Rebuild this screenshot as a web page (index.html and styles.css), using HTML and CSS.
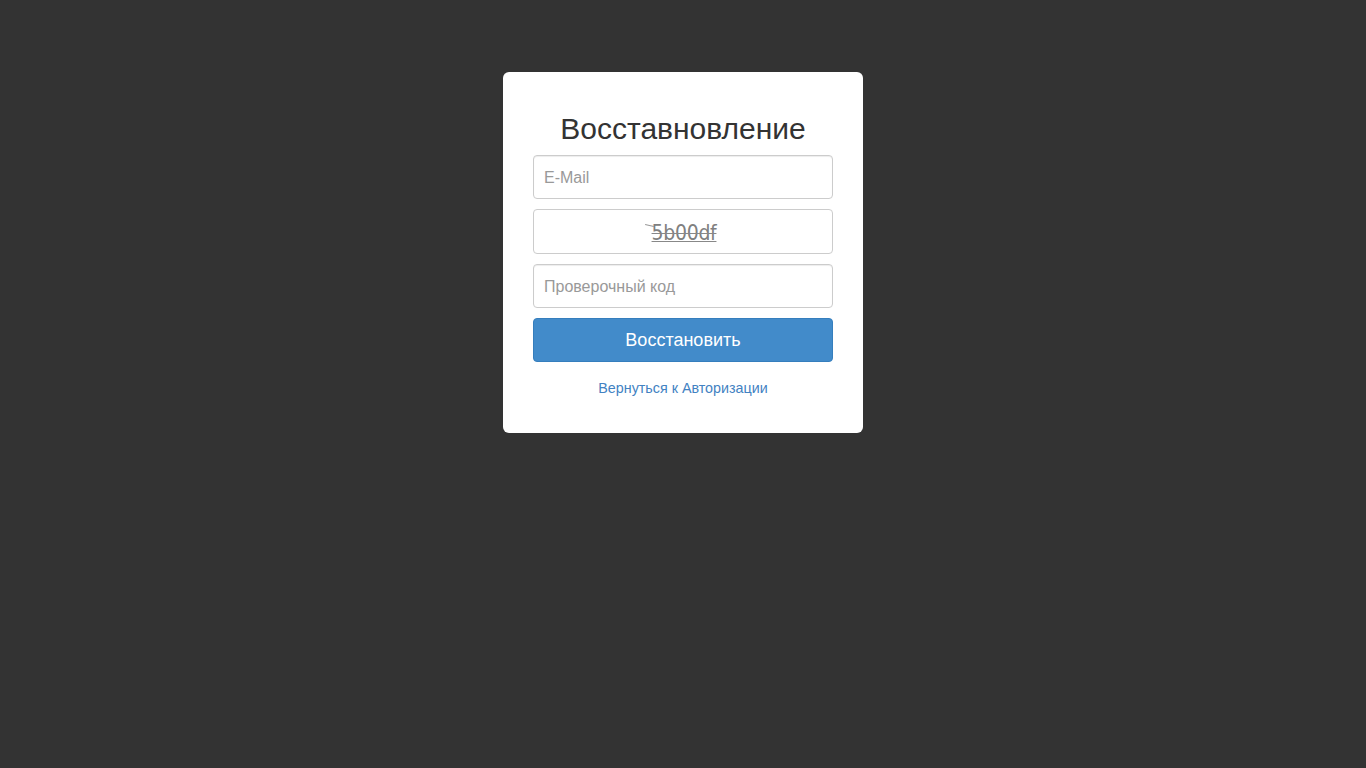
FILE: index.html
```html
<!DOCTYPE html>
<html lang="ru">
<head>
<meta charset="utf-8">
<title>Восстановление</title>
<link rel="stylesheet" href="styles.css">
</head>
<body>
<div class="page">
  <form class="card">
    <h2 class="title">Восставновление</h2>
    <input class="field" type="text" placeholder="E-Mail">
    <div class="captcha"><span class="cap-text">5b00df</span></div>
    <input class="field" type="text" placeholder="Проверочный код">
    <button class="btn" type="button">Восстановить</button>
    <div class="back"><a href="#">Вернуться к Авторизации</a></div>
  </form>
</div>
</body>
</html>
```
FILE: styles.css
```css
html, body {
  margin: 0;
  padding: 0;
  background: #333333;
  font-family: "Liberation Sans", Arial, sans-serif;
}
.page {
  display: flex;
  justify-content: center;
  padding-top: 72px;
}
.card {
  width: 300px;
  background: #fff;
  border-radius: 6px;
  padding: 30px 30px 35px;
  display: flex;
  flex-direction: column;
}
.title {
  margin: 10px 0 10px;
  font-size: 30px;
  font-weight: normal;
  line-height: 33px;
  text-align: center;
  color: #333;
}
.field {
  box-sizing: border-box;
  width: 300px;
  height: 44px;
  margin: 0 0 10px;
  padding: 11px 10px 9px;
  border: 1px solid #ccc;
  border-radius: 4px;
  font-family: "Liberation Sans", Arial, sans-serif;
  font-size: 16px;
  color: #555;
  outline: none;
  box-shadow: inset 0 1px 1px rgba(0,0,0,0.075);
}
.field::placeholder {
  color: #999;
}
.captcha {
  box-sizing: border-box;
  height: 45px;
  margin: 0 0 10px;
  border: 1px solid #ccc;
  border-radius: 4px;
  display: flex;
  align-items: center;
  justify-content: center;
  padding-top: 2px;
}
.cap-text {
  position: relative;
  margin-left: 2px;
  font-family: "DejaVu Sans Condensed", "DejaVu Sans", sans-serif;
  font-size: 21px;
  color: #808080;
  letter-spacing: -0.3px;
  text-decoration: underline line-through;
  text-decoration-color: #888;
  text-decoration-thickness: 1px;
}
.cap-text::before {
  content: "";
  position: absolute;
  left: -7px;
  top: 4px;
  width: 9px;
  height: 0;
  border-top: 1px solid #999;
  transform: rotate(14deg);
}
.btn {
  height: 44px;
  padding-top: 2px;
  border: 1px solid #357ebd;
  border-radius: 4px;
  background: #428bca;
  color: #fff;
  font-family: "Liberation Sans", Arial, sans-serif;
  font-size: 18px;
  cursor: pointer;
}
.back {
  margin-top: 16px;
  text-align: center;
  font-size: 14.3px;
  line-height: 20px;
}
.back a {
  color: #4282c2;
  text-decoration: none;
}
```
